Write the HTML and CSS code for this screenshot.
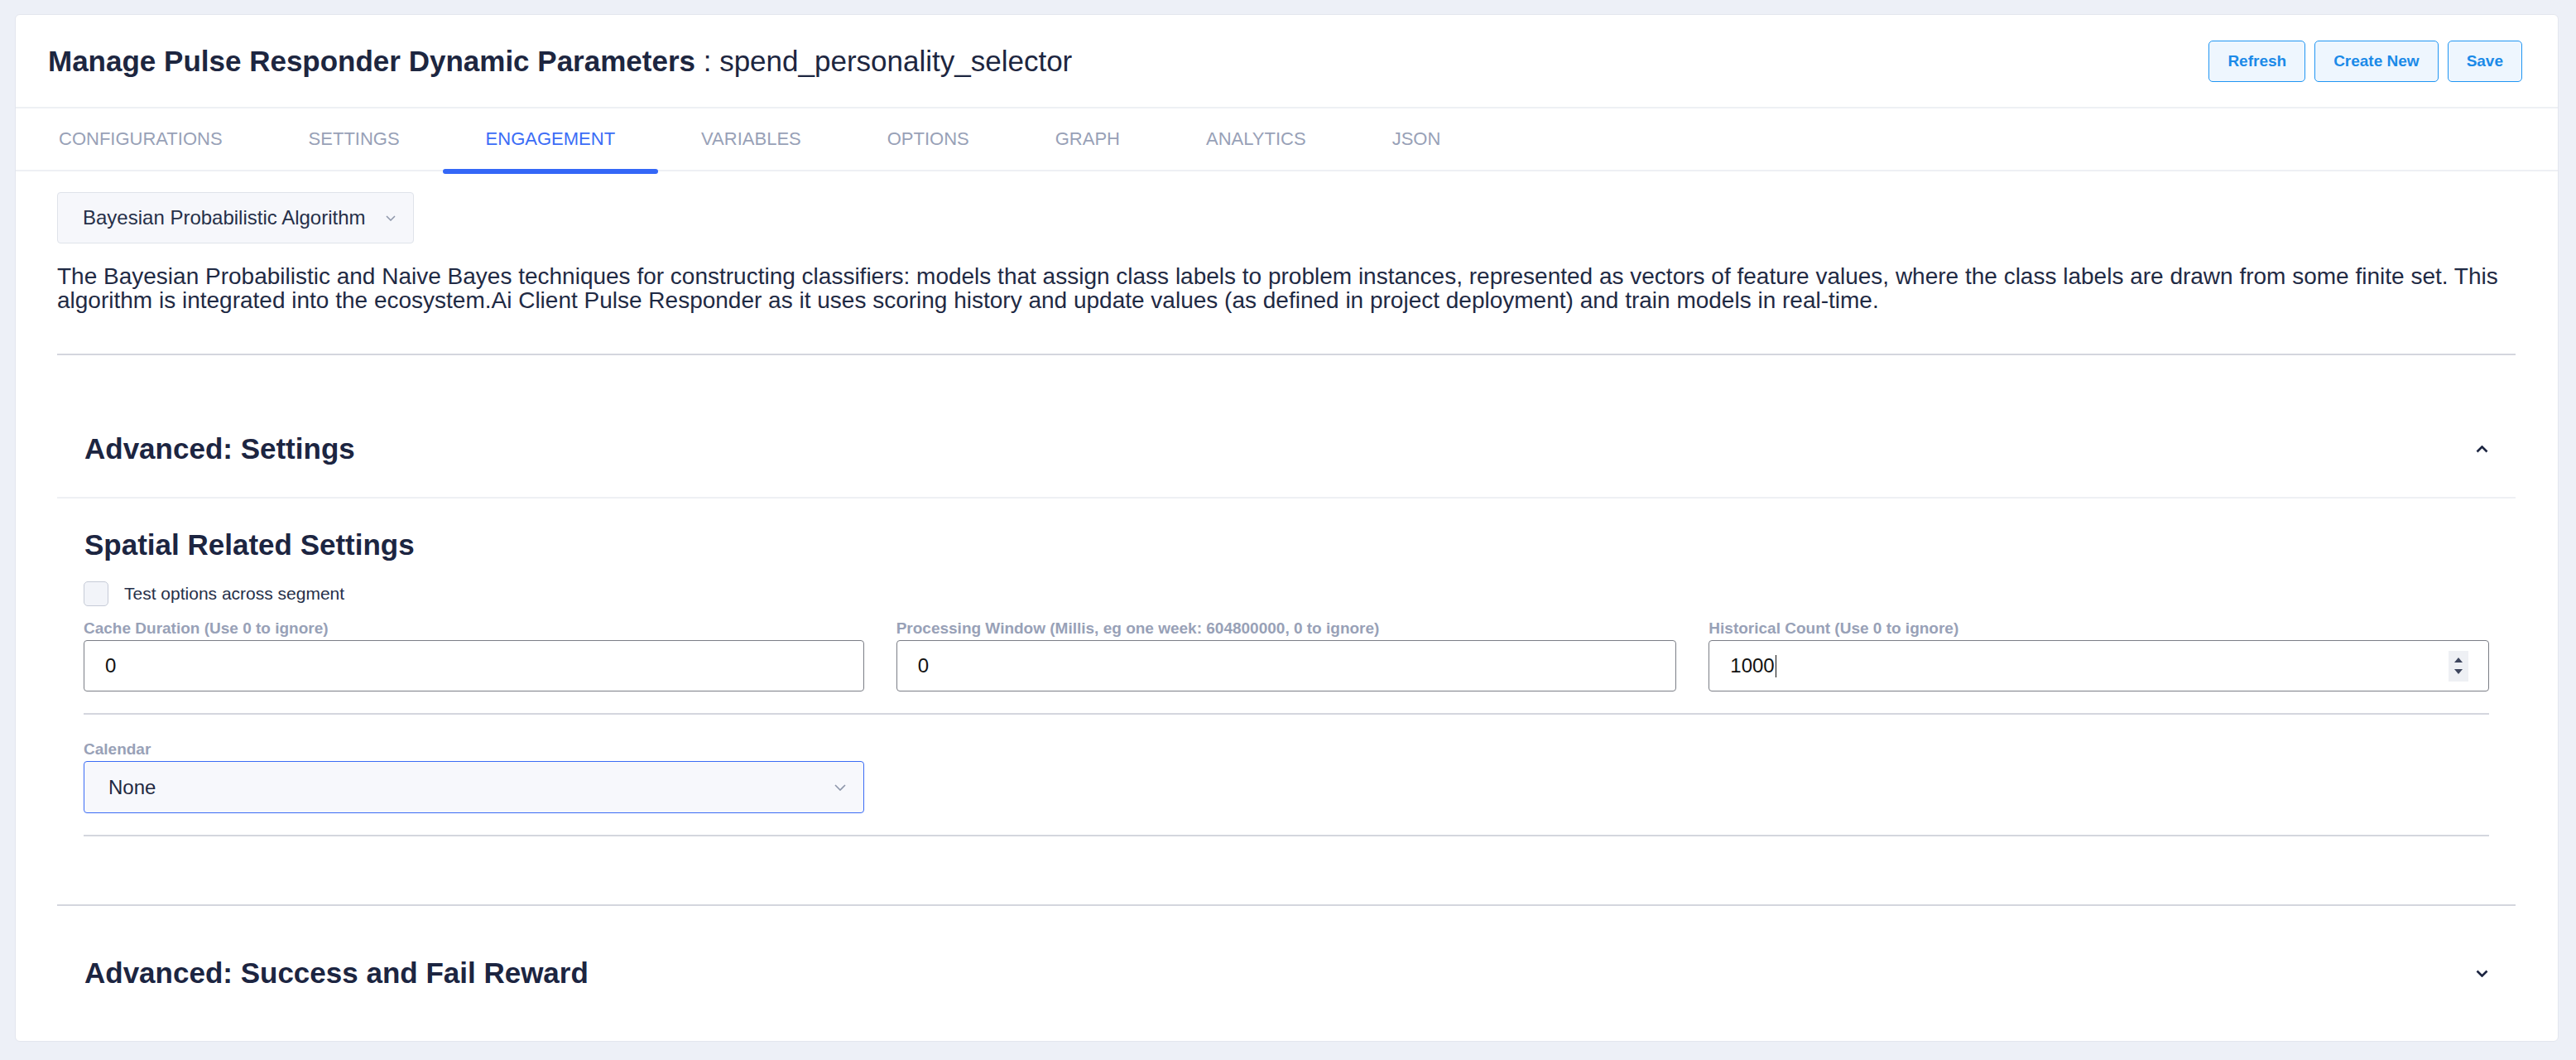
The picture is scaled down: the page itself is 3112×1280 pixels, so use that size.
FILE: index.html
```html
<!DOCTYPE html>
<html lang="en">
<head>
<meta charset="utf-8">
<title>Manage Pulse Responder Dynamic Parameters</title>
<link rel="stylesheet" href="styles.css">
</head>
<body>
<div class="page">
  <div class="card">
    <header class="head">
      <h1 class="title"><strong>Manage Pulse Responder Dynamic Parameters</strong> : spend_personality_selector</h1>
      <div class="actions">
        <button class="btn">Refresh</button>
        <button class="btn">Create New</button>
        <button class="btn">Save</button>
      </div>
    </header>
    <nav class="tabs">
      <span class="tab">CONFIGURATIONS</span>
      <span class="tab">SETTINGS</span>
      <span class="tab active">ENGAGEMENT</span>
      <span class="tab">VARIABLES</span>
      <span class="tab">OPTIONS</span>
      <span class="tab">GRAPH</span>
      <span class="tab">ANALYTICS</span>
      <span class="tab">JSON</span>
    </nav>
    <main class="content">
      <div class="algo">
        <span>Bayesian Probabilistic Algorithm</span>
        <svg class="algo-chev" width="12" height="7" viewBox="0 0 12 7"><path d="M1 1l5 5 5-5" fill="none" stroke="#8d96aa" stroke-width="1.5"/></svg>
      </div>
      <p class="desc">The Bayesian Probabilistic and Naive Bayes techniques for constructing classifiers: models that assign class labels to problem instances, represented as vectors of feature values, where the class labels are drawn from some finite set. This algorithm is integrated into the ecosystem.Ai Client Pulse Responder as it uses scoring history and update values (as defined in project deployment) and train models in real-time.</p>
      <hr class="sep">

      <section class="acc open">
        <div class="acc-head">
          <h2>Advanced: Settings</h2>
          <svg width="15" height="9" viewBox="0 0 15 9"><path d="M1.5 7.5l6-6 6 6" fill="none" stroke="#1c2541" stroke-width="2.6"/></svg>
        </div>
        <div class="acc-body">
          <h3>Spatial Related Settings</h3>
          <label class="check"><span class="box"></span><span>Test options across segment</span></label>
          <div class="row">
            <div class="fg">
              <div class="lbl">Cache Duration (Use 0 to ignore)</div>
              <div class="field"><span>0</span></div>
            </div>
            <div class="fg">
              <div class="lbl">Processing Window (Millis, eg one week: 604800000, 0 to ignore)</div>
              <div class="field"><span>0</span></div>
            </div>
            <div class="fg">
              <div class="lbl">Historical Count (Use 0 to ignore)</div>
              <div class="field focus-num"><span>1000</span><span class="caret"></span>
                <span class="spin">
                  <svg width="10" height="6" viewBox="0 0 10 6"><path d="M5 0L10 6H0z" fill="#3e465e"/></svg>
                  <svg width="10" height="6" viewBox="0 0 10 6"><path d="M0 0h10L5 6z" fill="#3e465e"/></svg>
                </span>
              </div>
            </div>
          </div>
          <div class="row row2">
            <div class="fg">
              <div class="lbl">Calendar</div>
              <div class="field select"><span>None</span>
                <svg width="14" height="8" viewBox="0 0 14 8"><path d="M1 1l6 6 6-6" fill="none" stroke="#8d96aa" stroke-width="1.6"/></svg>
              </div>
            </div>
          </div>
        </div>
      </section>

      <section class="acc closed">
        <div class="acc-head">
          <h2>Advanced: Success and Fail Reward</h2>
          <svg width="15" height="9" viewBox="0 0 15 9"><path d="M1.5 1.5l6 6 6-6" fill="none" stroke="#1c2541" stroke-width="2.6"/></svg>
        </div>
      </section>
    </main>
  </div>
</div>
</body>
</html>
```
FILE: styles.css
```css
* { box-sizing: border-box; }
html, body { margin: 0; padding: 0; }
body {
  background: #edf0f7;
  font-family: "Liberation Sans", Arial, Helvetica, sans-serif;
  color: #1f2942;
}
.page {
  padding: 17px 21px 21px 18px;
}
.card {
  background: #ffffff;
  border: 1px solid #e3e6ee;
  border-radius: 6px;
  padding-bottom: 24px;
}
.head {
  height: 113px;
  display: flex;
  align-items: center;
  justify-content: space-between;
  padding: 0 43px 0 39px;
  border-bottom: 2px solid #eef0f4;
}
.title {
  margin: 0;
  font-size: 35px;
  font-weight: 400;
  color: #1d2640;
  line-height: 1.2;
}
.title strong { font-weight: 700; }
.actions { display: flex; gap: 11px; }
.btn {
  height: 50px;
  padding: 0 22px;
  border: 1px solid #2196f3;
  border-radius: 5px;
  background: #eef6fe;
  color: #1b8ae8;
  font-family: inherit;
  font-size: 19px;
  font-weight: 700;
}
.tabs {
  display: flex;
  height: 76px;
  border-bottom: 2px solid #eef0f4;
}
.tab {
  position: relative;
  display: flex;
  align-items: center;
  padding: 0 52px;
  font-size: 22px;
  color: #98a1b7;
}
.tab.active { color: #3b6cf6; }
.tab.active::after {
  content: "";
  position: absolute;
  left: 0;
  right: 0;
  bottom: -5px;
  height: 6px;
  border-radius: 3px;
  background: #3467f7;
}
.content {
  padding: 25px 51px 0 50px;
}
.algo {
  display: inline-flex;
  align-items: center;
  gap: 24px;
  height: 62px;
  padding: 0 21px 0 30px;
  background: #f6f7fb;
  border: 1px solid #dfe3ea;
  border-radius: 4px;
  font-size: 24px;
  color: #263049;
}
.desc {
  margin: 26px 0 0;
  font-size: 28px;
  line-height: 28.7px;
  color: #1f2a44;
}
.sep {
  margin: 50px 0 0;
  border: 0;
  border-top: 2px solid #d4d6de;
  height: 0;
}
.acc.open {
  margin-top: 55px;
  border-bottom: 2px solid #d4d6de;
}
.acc.closed { margin-top: 23px; }
.acc-head {
  height: 116px;
  display: flex;
  align-items: center;
  justify-content: space-between;
  padding: 0 33px 0 33px;
}
.acc.open .acc-head {
  height: 118px;
  border-bottom: 2px solid #eef0f4;
}
.acc-head h2 {
  margin: 0;
  font-size: 35px;
  font-weight: 700;
  line-height: 38px;
  color: #1c2541;
}
.acc-body {
  padding: 36px 32px 82px;
}
.acc-body h3 {
  margin: 0 0 0 1px;
  font-size: 35px;
  font-weight: 700;
  line-height: 39px;
  color: #1c2541;
}
.check {
  margin-top: 25px;
  display: flex;
  align-items: center;
  gap: 19px;
  font-size: 21px;
  color: #263049;
}
.box {
  width: 30px;
  height: 30px;
  background: #f2f4f9;
  border: 1px solid #c6cbd7;
  border-radius: 5px;
}
.row {
  margin-top: 15px;
  display: grid;
  grid-template-columns: repeat(3, 1fr);
  gap: 39px;
  padding-bottom: 26px;
  border-bottom: 2px solid #d4d6de;
}
.row2 {
  margin-top: 0;
  padding-top: 30px;
}
.lbl {
  font-size: 19px;
  font-weight: 700;
  line-height: 23px;
  color: #98a1b7;
  margin-bottom: 3px;
  white-space: nowrap;
}
.field {
  height: 62px;
  display: flex;
  align-items: center;
  padding: 0 24px 0 25px;
  border: 1px solid #7b7e86;
  border-radius: 4px;
  font-size: 24px;
  color: #111111;
  background: #ffffff;
}
.caret {
  width: 1px;
  height: 27px;
  background: #111111;
  margin-left: 1px;
}
.spin {
  margin-left: auto;
  width: 24px;
  height: 37px;
  background: #eef0f4;
  display: flex;
  flex-direction: column;
  align-items: center;
  justify-content: center;
  gap: 8px;
}
.field.select {
  height: 63px;
  justify-content: space-between;
  padding: 0 21px 0 29px;
  border-color: #3b6cf5;
  background: #f7f8fc;
  color: #1f2942;
}
```
